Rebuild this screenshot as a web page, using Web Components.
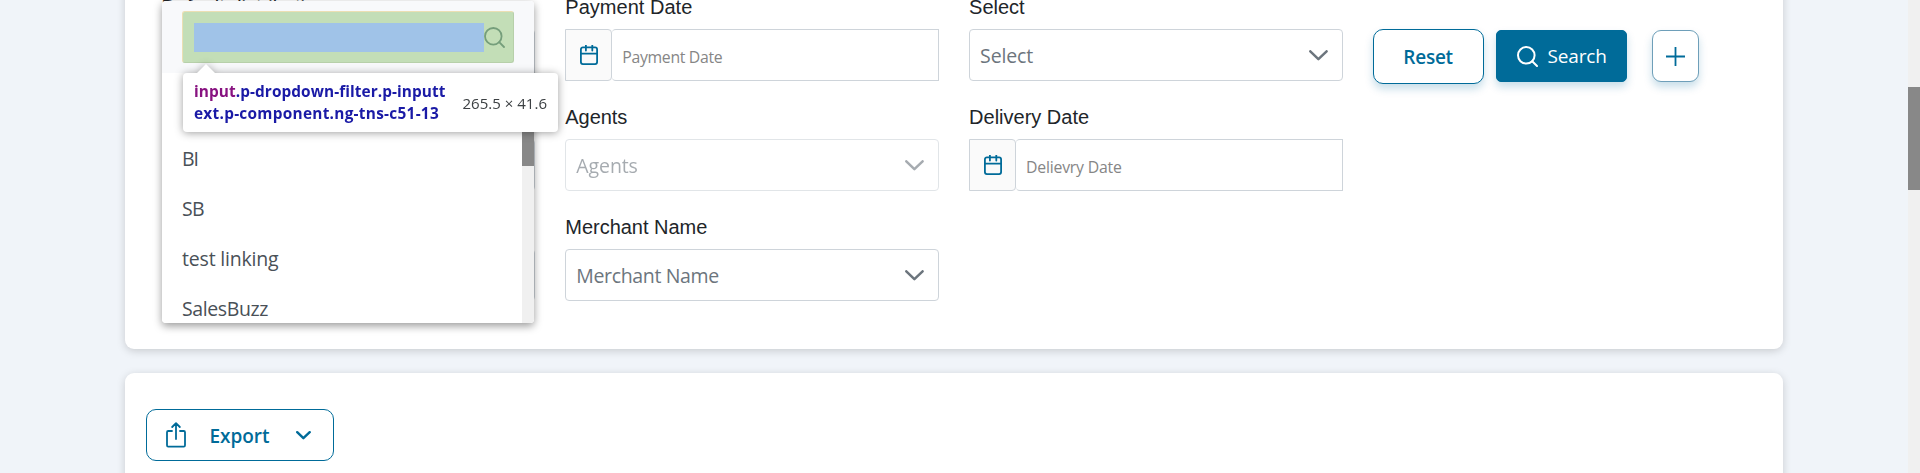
<!DOCTYPE html>
<html lang="en">
<head>
<meta charset="utf-8">
<title>Orders</title>
<style>
html,body{margin:0;height:473px;overflow:hidden;background:#f0f4f9}
body{font-family:"Open Sans","Noto Sans",sans-serif}
</style>
</head>
<body>
<order-page></order-page>
<script>
const define = (name, html, setup) => customElements.define(name, class extends HTMLElement {
  connectedCallback() {
    if (this.shadowRoot) return;
    const t = document.createElement('template');
    t.innerHTML = typeof html === 'function' ? html(this) : html;
    this.attachShadow({mode: 'open'}).append(t.content.cloneNode(true));
    if (setup) setup(this);
  }
});

// A single line of text whose tracking is tuned so that it spans the width given in "w".
define('fit-text', '<style>:host{display:inline-block;white-space:nowrap}</style><span><slot></slot></span>', el => {
  const target = +el.getAttribute('w');
  const n = el.textContent.length;
  const width = el.shadowRoot.querySelector('span').getBoundingClientRect().width;
  if (target && width) el.style.letterSpacing = ((target - width) / n).toFixed(3) + 'px';
});

const icons = {
  search: '<svg width="21" height="21" viewBox="0 0 21 21"><circle cx="9.3" cy="9.3" r="8.3"/><path d="M15.2 15.2L20 20"/></svg>',
  calendar: '<svg width="18" height="20" viewBox="0 0 18 20"><rect x=".9" y="2.4" width="16.2" height="16.7" rx="2"/><path d="M1 8.7h16M5.9 0v5.5M12.3 0v5.5"/></svg>',
  chevron: '<svg width="19" height="11" viewBox="0 0 19 11"><path d="M1.3 1.3L9.4 9.2l8.2-7.9"/></svg>',
  small: '<svg width="15" height="9" viewBox="0 0 15 9"><path d="M1.2 1.2L7.4 7.2l6.3-6"/></svg>',
  plus: '<svg width="19" height="19" viewBox="0 0 19 19"><path d="M9.5 0v19M0 9.5h19"/></svg>',
  export: '<svg width="20" height="26" viewBox="0 0 20 26"><path d="M6 9H2.2Q1 9 1 10.2V23.3Q1 24.7 2.2 24.7H17.8Q19 24.7 19 23.3V10.2Q19 9 17.8 9H14M10 17V1.3M6.2 5L10 1.2 13.8 5"/></svg>'
};
define('ui-icon', el => `<style>:host{display:block;line-height:0}svg{display:block;fill:none;stroke:currentColor;stroke-width:var(--stroke,1.8);stroke-linecap:round;stroke-linejoin:round}</style>${icons[el.getAttribute('name')]}`);

define('form-field', `<style>
:host{display:flex;flex-direction:column;gap:10px;height:86px}
.label{height:24px;font:20px/24px "Liberation Sans",Arial,sans-serif;color:#212529}
</style><div class="label"><slot name="label"></slot></div><slot></slot>`);

define('select-box', `<style>
:host{display:flex;box-sizing:border-box;height:52px;border:1px solid #ced4da;border-radius:4px;background:#fff;align-items:center;justify-content:space-between;padding:0 14px 0 10px;color:#6c757d;font-size:19.5px;line-height:28px}
:host([disabled]){opacity:.6}
.text{padding-top:2px}
ui-icon{--stroke:2.5}
</style><div class="text"><slot></slot></div><ui-icon name="chevron"></ui-icon>`);

define('date-box', `<style>
:host{display:flex;height:52px}
.addon{box-sizing:border-box;width:47px;border:1px solid #ced4da;background:#fafafa;display:flex;justify-content:center;padding-top:15px;color:#006b99;border-radius:0 4px 4px 0}
.input{box-sizing:border-box;flex:1;border:1px solid #ced4da;border-left:0;border-radius:4px 0 0 4px;background:#fff;padding:14px 0 0 10px;color:#868686;font-size:15.8px;line-height:26px}
</style><div class="addon"><ui-icon name="calendar"></ui-icon></div><div class="input"><slot></slot></div>`);

define('action-button', `<style>
:host{box-sizing:border-box;display:flex;align-items:center;justify-content:center;border:1px solid #006b99;border-radius:10px;background:#fff;color:#006b99;height:52px;font-size:19px;line-height:26px;font-weight:600}
:host([raised]){box-shadow:0 5px 9px rgba(0,107,153,.22)}
:host([primary]){background:#006b99;color:#fff;border-radius:5px;font-weight:500;gap:10px}
:host([square]){border-color:#6e9fb9;border-radius:9px}
</style><slot></slot>`);

define('white-card', `<style>
:host{display:block;box-sizing:border-box;width:1658px;background:#fff;border-radius:9px;box-shadow:0 2px 8px rgba(0,0,0,.17)}
</style><slot></slot>`);

define('dropdown-panel', `<style>
:host{display:flex;flex-direction:column;width:372px;height:322px;background:#fff;border-radius:4px;overflow:hidden}
.head{box-sizing:border-box;height:72px;flex:none;background:#f8f9fb;padding:10px 20px 0 20px}
.filter{box-sizing:border-box;height:51.5px;background:#c3deb7;border:1px solid #b7d0aa;border-top-color:#ecdfb3;border-left-color:#ecdfb3;border-radius:3px;display:flex;padding:10.5px 8px 0 11px;color:#759e7b}
.fill{width:290px;height:29.5px;background:#a0c3e8}
ui-icon{padding-top:4px;--stroke:1.8}
.body{display:flex;flex:1;min-height:0}
.list{flex:1;padding:11px 0 0 20px;color:#495057;font-size:19.5px}
.row{height:50px;line-height:50px}
.bar{width:12px;background:#f0f0f0}
.thumb{height:93px;background:#888}
</style>
<div class="head"><div class="filter"><div class="fill"></div><ui-icon name="search"></ui-icon></div></div>
<div class="body"><div class="list">
<div class="row"></div>
<div class="row"><fit-text w="16">BI</fit-text></div>
<div class="row"><fit-text w="22">SB</fit-text></div>
<div class="row"><fit-text w="96.5">test linking</fit-text></div>
<div class="row"><fit-text w="86">SalesBuzz</fit-text></div>
</div><div class="bar"><div class="thumb"></div></div></div>`);

define('inspect-tip', `<style>
:host{display:block;filter:drop-shadow(0 1px 4px rgba(0,0,0,.38))}
.arrow{margin-left:14px;width:18px;height:9px;background:#fff;clip-path:polygon(50% 0,100% 100%,0 100%)}
.box{box-sizing:border-box;width:375px;height:59px;background:#fff;border-radius:4px;display:flex;justify-content:space-between;align-items:center;padding:0 11px 0 11px}
.name{font-size:15.4px;line-height:22px;font-weight:700;color:#1a1aa6}
b{color:#881280;font-weight:inherit}
.name div{height:22px}
.size{font-size:15px;color:#3c4043;padding-top:1px}
</style><div class="arrow"></div><div class="box"><div class="name"><div><fit-text w="251.5"><b>input</b>.p-dropdown-filter.p-inputt</fit-text></div><div><fit-text w="245">ext.p-component.ng-tns-c51-13</fit-text></div></div><div class="size"><fit-text w="84.5">265.5 × 41.6</fit-text></div></div>`);

define('order-page', `<style>
:host{display:flex;justify-content:space-between;width:1920px;height:473px;overflow:hidden;position:relative}
main{padding-left:125px;display:flex;flex-direction:column;gap:24px}
.filters{height:389px;flex:none;margin-top:-40px;padding:35px 0 0 36.5px;display:flex;gap:30px}
.grid{display:grid;grid-template-columns:repeat(3,373.5px);column-gap:30.3px;row-gap:24px;align-content:start}
.actions{display:flex;padding-top:34px;align-items:flex-start}
.reset{width:111px;height:55px}
.search{width:131px;margin:1px 0 0 12px}
.search ui-icon{margin-left:1px;--stroke:2}
.plus{width:47px;margin:1px 0 0 25px}
.table{height:200px;flex:none;padding:36px 0 0 21px}
.export{width:188px;padding:0 23px 0 19px;justify-content:flex-start}
.export fit-text{margin:1px 26px 0 23.5px}
.scroll{width:12px;background:#f0f0f0;padding-top:87px;box-sizing:border-box}
.thumb{height:103px;background:#888}
.menu{position:absolute;left:162px;top:1px;border-radius:4px;box-shadow:0 3px 8px rgba(0,0,0,.4)}
.tip{position:absolute;left:183px;top:64px}
</style>
<main>
<white-card class="filters">
<div class="grid">
<form-field><fit-text slot="label">Default distribution</fit-text><select-box></select-box></form-field>
<form-field><fit-text slot="label" w="127">Payment Date</fit-text><date-box><fit-text w="100">Payment Date</fit-text></date-box></form-field>
<form-field><fit-text slot="label" w="55.5">Select</fit-text><select-box><fit-text w="53">Select</fit-text></select-box></form-field>
<form-field><select-box></select-box></form-field>
<form-field><fit-text slot="label" w="62">Agents</fit-text><select-box disabled><fit-text w="61.5">Agents</fit-text></select-box></form-field>
<form-field><fit-text slot="label" w="120">Delivery Date</fit-text><date-box><fit-text w="95.5">Delievry Date</fit-text></date-box></form-field>
<form-field><select-box></select-box></form-field>
<form-field><fit-text slot="label" w="142">Merchant Name</fit-text><select-box><fit-text w="142.5">Merchant Name</fit-text></select-box></form-field>
</div>
<div class="actions">
<action-button class="reset" raised><fit-text w="49.5">Reset</fit-text></action-button>
<action-button class="search" raised primary><ui-icon name="search"></ui-icon><fit-text w="59">Search</fit-text></action-button>
<action-button class="plus" raised square><ui-icon name="plus"></ui-icon></action-button>
</div>
</white-card>
<white-card class="table">
<action-button class="export"><ui-icon name="export"></ui-icon><fit-text w="60">Export</fit-text><ui-icon name="small" style="--stroke:2.4"></ui-icon></action-button>
</white-card>
</main>
<div class="scroll"><div class="thumb"></div></div>
<div class="menu"><dropdown-panel></dropdown-panel></div>
<inspect-tip class="tip"></inspect-tip>`);
</script>
</body>
</html>
